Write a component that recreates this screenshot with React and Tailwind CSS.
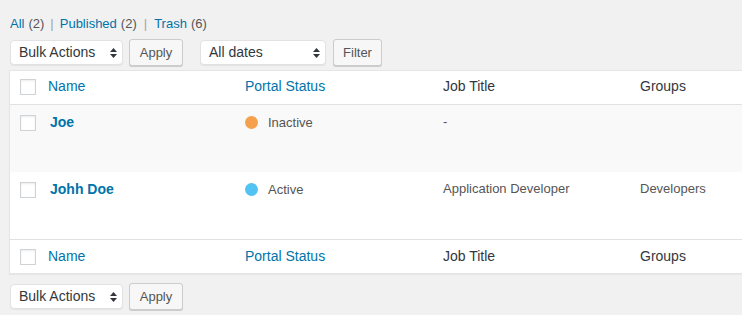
import React from 'react'

const font = { fontFamily: '"Liberation Sans", Arial, sans-serif' }

const Arrows = () => (
  <svg width="7" height="10" viewBox="0 0 7 10" className="absolute right-[5px] top-1/2 -translate-y-1/2">
    <path d="M3.5 0 L7 4 H0 Z" fill="#32373c" />
    <path d="M0 6 H7 L3.5 10 Z" fill="#32373c" />
  </svg>
)

const Select = ({ label, w }) => (
  <div className={`relative h-[25px] ${w} bg-white border border-[#e2e2e2] rounded-[4px] shadow-[0_1px_1px_rgba(0,0,0,0.06)] flex items-center pl-[8px] text-[14px] text-[#32373c]`}>
    {label}
    <Arrows />
  </div>
)

const Button = ({ label, w }) => (
  <div className={`h-[27px] ${w} bg-[#f7f7f7] border border-[#cccccc] rounded-[3px] shadow-[0_1px_0_#cccccc] flex items-center justify-center text-[13px] text-[#555555]`}>
    {label}
  </div>
)

const Checkbox = () => (
  <div className="w-[16px] h-[16px] bg-white border border-[#cfd3d6] shadow-[inset_0_1px_2px_rgba(0,0,0,0.08)]" />
)

const HeadRow = ({ top }) => (
  <div className={`flex h-[34px] items-center text-[14px] ${top ? 'border-b border-[#e1e1e1] pb-[2px]' : 'border-t border-[#e1e1e1]'}`}>
    <div className="w-[30px] pl-[10px] flex items-center"><Checkbox /></div>
    <div className="w-[197px] pl-[8px] text-[#0073aa]">Name</div>
    <div className="w-[198px] pl-[8px] text-[#0073aa]">Portal Status</div>
    <div className="w-[197px] pl-[8px] text-[#32373c]">Job Title</div>
    <div className="pl-[8px] text-[#32373c]">Groups</div>
  </div>
)

const rows = [
  { name: 'Joe', status: 'Inactive', dot: 'bg-[#f5a04c]', job: '-', group: '', alt: true },
  { name: 'Johh Doe', status: 'Active', dot: 'bg-[#52c3f3]', job: 'Application Developer', group: 'Developers', alt: false },
]

export default function App() {
  return (
    <div className="w-[742px] h-[315px] overflow-hidden bg-[#f1f1f1]" style={font}>
      <div className="pt-[16px] pl-[10px] h-[39px] text-[13px] leading-[16px] flex">
        <span className="text-[#0073aa]">All</span>
        <span className="text-[#555555] ml-[4px]">(2)</span>
        <span className="text-[#a0a5aa] mx-[6px]">|</span>
        <span className="text-[#0073aa]">Published</span>
        <span className="text-[#555555] ml-[4px]">(2)</span>
        <span className="text-[#a0a5aa] mx-[7px]">|</span>
        <span className="text-[#0073aa]">Trash</span>
        <span className="text-[#555555] ml-[4px]">(6)</span>
      </div>

      <div className="flex items-start pl-[10px] h-[31px]">
        <div className="mt-[1px]"><Select label="Bulk Actions" w="w-[113px]" /></div>
        <div className="ml-[6px]"><Button label="Apply" w="w-[54px]" /></div>
        <div className="ml-[17px] mt-[1px]"><Select label="All dates" w="w-[126px]" /></div>
        <div className="ml-[7px]"><Button label="Filter" w="w-[49px]" /></div>
      </div>

      <div className="ml-[9px] bg-white border border-r-0 border-[#e5e5e5] shadow-[0_1px_1px_rgba(0,0,0,0.04)]">
        <HeadRow top />
        {rows.map((r) => (
          <div key={r.name} className={`flex h-[67px] items-start ${r.alt ? 'bg-[#f9f9f9]' : 'bg-white'}`}>
            <div className="w-[30px] pl-[10px] pt-[10px]"><Checkbox /></div>
            <div className="w-[197px] pl-[10px] pt-[7px] text-[14px] font-bold text-[#0073aa]">{r.name}</div>
            <div className="w-[198px] pl-[8px] pt-[8px] flex items-center text-[13px] text-[#555555]">
              <span className={`w-[13px] h-[13px] rounded-full ${r.dot}`} />
              <span className="ml-[10px]">{r.status}</span>
            </div>
            <div className="w-[197px] pl-[8px] pt-[7px] text-[13px] text-[#555555]">{r.job}</div>
            <div className="pl-[8px] pt-[7px] text-[13px] text-[#555555]">{r.group}</div>
          </div>
        ))}
        <HeadRow />
      </div>

      <div className="flex items-start pl-[10px] pt-[9px]">
        <div className="mt-[1px]"><Select label="Bulk Actions" w="w-[113px]" /></div>
        <div className="ml-[6px]"><Button label="Apply" w="w-[54px]" /></div>
      </div>
    </div>
  )
}
